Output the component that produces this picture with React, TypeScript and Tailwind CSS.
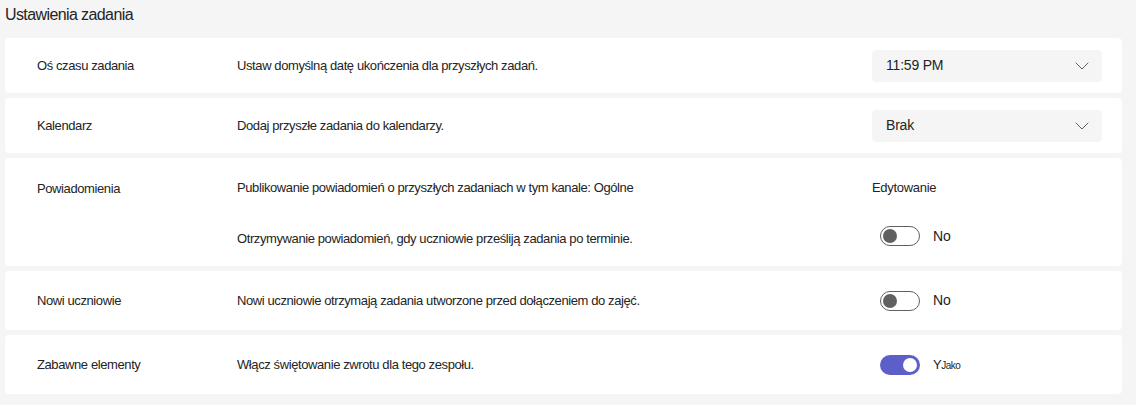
import React from "react";

const font = { fontFamily: '"Segoe UI", "Liberation Sans", Arial, sans-serif' };

function Chevron() {
  return (
    <svg width="14" height="8" viewBox="0 0 14 8" fill="none">
      <path d="M1 1L7 7L13 1" stroke="#616161" strokeWidth="1" strokeLinecap="round" strokeLinejoin="round" />
    </svg>
  );
}

function Dropdown({ value }: { value: string }) {
  return (
    <div className="flex h-[32px] w-[230px] items-center justify-between rounded-[4px] bg-[#f5f5f5] pl-[14px] pr-[13px]">
      <span className="text-[14px] tracking-[-0.2px] text-[#242424]">{value}</span>
      <Chevron />
    </div>
  );
}

function Toggle({ on, label }: { on: boolean; label: React.ReactNode }) {
  return (
    <div className="flex items-center">
      {on ? (
        <div className="flex h-[20px] w-[40px] items-center justify-end rounded-full bg-[#5b5fc7] pr-[3px]">
          <div className="h-[14px] w-[14px] rounded-full bg-white" />
        </div>
      ) : (
        <div className="flex h-[20px] w-[40px] items-center rounded-full border border-[#616161] bg-white pl-[2px]">
          <div className="h-[14px] w-[14px] rounded-full bg-[#616161]" />
        </div>
      )}
      <div className="ml-[13px] text-[14px] text-[#242424]">{label}</div>
    </div>
  );
}

function Row({ label, desc, control, h }: { label: string; desc: string; control: React.ReactNode; h: string }) {
  return (
    <div className={`flex items-center rounded-[4px] bg-white ${h}`}>
      <div className="w-[232px] shrink-0 pl-[32px] text-[13px] tracking-[-0.4px] text-[#242424]">{label}</div>
      <div className="flex-1 text-[13px] tracking-[-0.4px] text-[#242424]">{desc}</div>
      <div className="w-[250px] shrink-0 pr-[20px]">{control}</div>
    </div>
  );
}

export default function App() {
  return (
    <div className="h-[405px] w-[1136px] bg-[#f5f5f5] pl-[5px] pr-[14px]" style={font}>
      <div className="flex h-[38px] items-center pb-[8px] text-[16px] tracking-[-0.6px] text-[#242424]">Ustawienia zadania</div>
      <div className="flex flex-col gap-[5px]">
        <Row
          h="h-[55px]"
          label="Oś czasu zadania"
          desc="Ustaw domyślną datę ukończenia dla przyszłych zadań."
          control={<Dropdown value="11:59 PM" />}
        />
        <Row
          h="h-[55px]"
          label="Kalendarz"
          desc="Dodaj przyszłe zadania do kalendarzy."
          control={<Dropdown value="Brak" />}
        />
        <div className="flex h-[108px] rounded-[4px] bg-white">
          <div className="w-[232px] shrink-0 pl-[32px] pt-[21px] text-[13px] tracking-[-0.4px] text-[#242424]">Powiadomienia</div>
          <div className="flex flex-1 flex-col">
            <div className="mt-[15px] flex h-[30px] items-center">
              <div className="flex-1 text-[13px] tracking-[-0.4px] text-[#242424]">
                Publikowanie powiadomień o przyszłych zadaniach w tym kanale: Ogólne
              </div>
              <div className="w-[250px] shrink-0 text-[13px] tracking-[-0.3px] text-[#242424]">Edytowanie</div>
            </div>
            <div className="mt-[18px] flex h-[30px] items-center">
              <div className="flex-1 pt-[6px] text-[13px] tracking-[-0.4px] text-[#242424]">
                Otrzymywanie powiadomień, gdy uczniowie prześliją zadania po terminie.
              </div>
              <div className="w-[250px] shrink-0">
                <div className="pl-[8px]">
                  <Toggle on={false} label="No" />
                </div>
              </div>
            </div>
          </div>
        </div>
        <Row
          h="h-[59px]"
          label="Nowi uczniowie"
          desc="Nowi uczniowie otrzymają zadania utworzone przed dołączeniem do zajęć."
          control={
            <div className="pl-[8px]">
              <Toggle on={false} label="No" />
            </div>
          }
        />
        <Row
          h="h-[59px]"
          label="Zabawne elementy"
          desc="Włącz świętowanie zwrotu dla tego zespołu."
          control={
            <div className="pl-[8px]">
              <Toggle
                on={true}
                label={
                  <span className="tracking-[-0.5px]">
                    <span className="text-[13px]">Y</span>
                    <span className="text-[10px]">Jako</span>
                  </span>
                }
              />
            </div>
          }
        />
      </div>
    </div>
  );
}
